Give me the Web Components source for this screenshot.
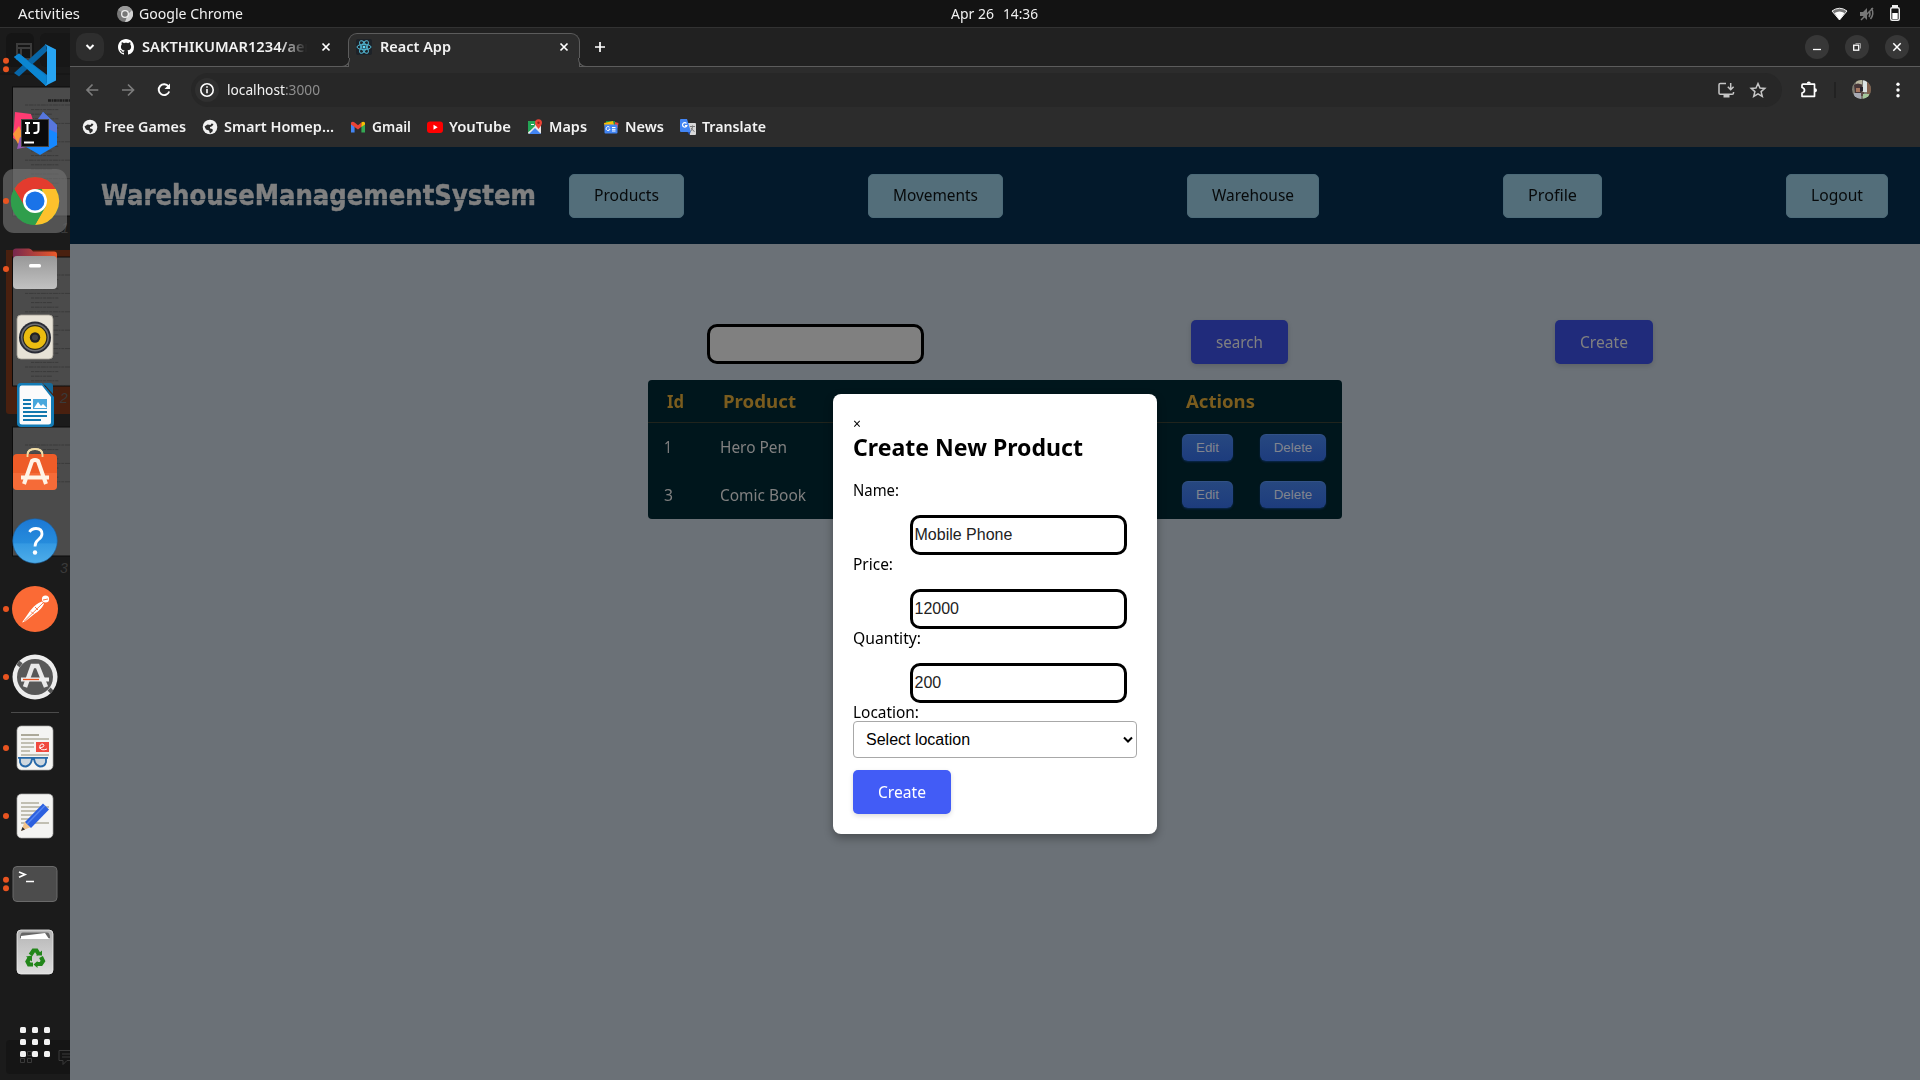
<!DOCTYPE html>
<html lang="en">
<head>
<meta charset="utf-8">
<title>React App</title>
<style>
html,body{margin:0;height:100%;overflow:hidden;background:#1b1b1b}
body{font-family:"Noto Sans","Open Sans",sans-serif;font-size:15.5px;color:#000}
</style>
</head>
<body>
<desk-top></desk-top>
<script>
const define=(name,css,html,setup)=>{
  const tpl=document.createElement('template');
  tpl.innerHTML='<style>*{box-sizing:border-box}'+css+'</style>'+html;
  customElements.define(name,class extends HTMLElement{
    connectedCallback(){
      if(this.shadowRoot)return;
      this.attachShadow({mode:'open'}).appendChild(tpl.content.cloneNode(true));
      if(setup)setup(this,this.shadowRoot);
    }
  });
};

/* Label condensed or widened to a set width */
define('fit-text',
 ':host{display:inline-block;white-space:nowrap;flex:none}span{display:inline-block;transform-origin:0 50%}',
 '<span><slot></slot></span>',
 (h,r)=>{const w=+h.getAttribute('w'),s=r.querySelector('span');h.style.width=w+'px';
  const n=s.getBoundingClientRect().width;if(n)s.style.transform='scaleX('+w/n+')';});

define('top-bar',
 `:host{display:flex;height:28px;background:#131313;border-bottom:1px solid #323232;color:#f0f0f0;font-size:14.2px;line-height:27px;align-items:center}
 .side{flex:1 1 0;display:flex;align-items:center}.l{padding-left:18px}.r{justify-content:flex-end;padding-right:19px}
 .mid{padding-left:69px;display:flex;gap:9px}svg{display:block}.app{margin-left:37px;margin-right:6px}.l,.mid{height:27px}`,
 `<div class="side l"><fit-text w="62">Activities</fit-text>
 <svg class="app" width="16" height="16" viewBox="0 0 16 16"><circle cx="8" cy="8" r="8" fill="#777"/><path d="M8 8 1 4A8 8 0 0 1 15 4Z" fill="#999"/><path d="M15 4A8 8 0 0 1 8 16L11 8Z" fill="#d2d2d2"/><circle cx="8" cy="8" r="4" fill="#eee"/><circle cx="8" cy="8" r="2.7" fill="#777"/></svg>
 <fit-text w="104">Google Chrome</fit-text></div>
 <div class="mid"><fit-text w="43">Apr 26</fit-text><fit-text w="35">14:36</fit-text></div>
 <div class="side r"><svg width="72" height="20" viewBox="0 0 72 20"><path d="M3 7Q10.500 1.500 18 7L10.500 16Z" fill="#777"/><path d="M3 7Q10.500 1.500 18 7L10.500 16Z" fill="none" stroke="#eee" stroke-width="1"/><path d="M5.500 9Q10.500 6 15.500 9L10.500 16Z" fill="#fff"/>
 <g fill="#777" stroke="#777"><path d="M31 8h3l4-4v12l-4-4h-3z" stroke="none"/><path d="M40 7q2 3 0 6M42.500 4q3 6-1 11M32 16 44 4" fill="none" stroke-width="1.500"/></g>
 <path d="M64 3V2h4v1" stroke="#eee" stroke-width="2" fill="none"/><rect x="61.700" y="3.700" width="8.600" height="12.600" rx="1.500" fill="none" stroke="#eee" stroke-width="1.400"/><rect x="63.300" y="9" width="5.400" height="6" fill="#fff"/></svg></div>`);

const paper=(x,y,w,h)=>`<rect x="${x}" y="${y}" width="${w}" height="${h}" rx="4.500" fill="#f4f4f2" stroke="#aaa" stroke-width=".7"/>`;
const lines=(a)=>a.map(l=>`<path d="M${l[0]} ${l[1]}h${l[2]}" stroke="${l[3]||'#c1bfb2'}" stroke-width="2"/>`).join('');
const ICONS={
 code:`<path d="M14 26l5-3.500 34 26-7 6.500Z" fill="#0b78c4"/><path d="M14 42l5 3.500L47 20l-1-7Z" fill="#0866a8"/><path d="M14 26l5-3.500L46 45v10Z" fill="#0b86d2"/><path d="M45 13l11 5.500V49.500L45 55q2-2 2-4V17q0-2-2-4Z" fill="#27a4f2"/>`,
 idea:`<path d="M15 13l16 2 4 12-13 18-9-6 1-12Z" fill="#fe3b72"/><path d="M13 35l6-8 5 12-6 6Z" fill="#f9963b"/><path d="M17 50l3-12 17 8Z" fill="#9659b4"/><path d="M43 13l14 13v20L40 56 26 48 37 25Z" fill="#1688ff"/><path d="M43 13l14 13v8L35 24Z" fill="#5876dc"/><rect x="21.500" y="20.500" width="27" height="27" fill="#0b0b0b" stroke="#444"/><path d="M25 24h5M27.500 24v10M25 34h5M33 24h5.500v7q0 3.500-5 3" stroke="#fff" stroke-width="2.100" fill="none"/><path d="M24 43.500h10" stroke="#fff" stroke-width="2"/>`,
 chrome:`<rect x="3" y="2" width="64" height="64" rx="11" fill="#717171" opacity=".65"/><circle cx="35" cy="34" r="24" fill="#2f9e4c"/><path d="M14.200 22A24 24 0 0 1 55.800 22H35L25 40Z" fill="#e33b2e"/><path d="M55.800 22A24 24 0 0 1 35 58L45.500 40 42 22Z" fill="#fdc12c"/><path d="M14.200 22 25 40 35 46 45 40 35 58A24 24 0 0 1 14.200 22Z" fill="#2f9e4c"/><circle cx="35" cy="34" r="12" fill="#fff"/><circle cx="35" cy="34" r="9.500" fill="#1a73e8"/>`,
 files:`<defs><linearGradient id="a"><stop stop-color="#77284e"/><stop offset="1" stop-color="#ec5a29"/></linearGradient><linearGradient id="b" x2="0" y2="1"><stop stop-color="#989898"/><stop offset="1" stop-color="#c2c2c2"/></linearGradient></defs><path d="M13 24V16q0-2.500 3-2.500h13q2 0 4 3h21q3 0 3 3V26Z" fill="url(#a)"/><rect x="13" y="21" width="44" height="33" rx="4" fill="url(#b)"/><rect x="29" y="29" width="12" height="3.500" rx="1.500" fill="#fff"/>`,
 music:`<rect x="17" y="12" width="36" height="44" rx="4" fill="#e7e2d6" stroke="#a39f96" stroke-width=".8"/><circle cx="35" cy="34.500" r="16" fill="#292b35"/><circle cx="35" cy="34.500" r="14" fill="#707175"/><circle cx="35" cy="34.500" r="12.500" fill="#2a2818"/><circle cx="35" cy="34.500" r="11.300" fill="#ecbd10"/><circle cx="35" cy="34.500" r="5.200" fill="#222"/><circle cx="35" cy="34.500" r="3" fill="#444"/>`,
 writer:`<path d="M21 12h21L54 26v26q0 4-4 4H21q-4 0-4-4V16q0-4 4-4Z" fill="#137bb5"/><path d="M21 14.500h21L51 26v25q0 2.500-2.500 2.500H22q-2.500 0-2.500-2.500V17q0-2.500 2-2.500Z" fill="#fbfbfb"/><path d="M43 12h7q3 0 3 3v8Z" fill="#176a99"/><path d="M23 29h8M23 33h8M23 37h8M23 41h24M23 45h24M23 49h18" stroke="#1478ae" stroke-width="2"/><rect x="33" y="28" width="14" height="10" fill="#48a7dc"/><path d="M34 37l4-6 3 4 2-2 4 4Z" fill="#fff"/>`,
 store:`<path d="M27.500 20v-4q0-6 7.500-6t7.500 6v1" stroke="#f0dca6" stroke-width="1.800" fill="none"/><rect x="13" y="15" width="44" height="36" rx="4" fill="#ee5c28"/><path d="M13 34h44v13q0 4-4 4H17q-4 0-4-4Z" fill="#ff8150" opacity=".4"/><path d="M27.500 18v-2q0-6 7.500-6t7.500 6v2" stroke="#f0dca6" stroke-width="1.800" fill="none"/><path d="M24 45 32 22q3-2 6 0l8 23M21 38.500H49" stroke="#fff3e5" stroke-width="4" fill="none"/>`,
 help:`<defs><linearGradient id="h" x2="0" y2="1"><stop stop-color="#1c78d4"/><stop offset=".55" stop-color="#268cdc"/><stop offset=".56" stop-color="#3499e2"/><stop offset="1" stop-color="#4eade9"/></linearGradient></defs><circle cx="35" cy="34" r="22.300" fill="url(#h)" stroke="#1b5f9e" stroke-width=".6"/><path d="M29.500 25q2-3.500 6.500-3.500 6 0 6 5.500 0 3-4 6-3 2.500-3 6.500" stroke="#fff" stroke-width="2.800" fill="none"/><circle cx="35" cy="45.500" r="2.200" fill="#fff"/>`,
 post:`<circle cx="35" cy="34" r="23" fill="#fb6a35"/><circle cx="45.500" cy="24" r="3.600" fill="#fff"/><path d="M22 47.500l8-11.500q6-8 12-9.500l2 2.500q-3 6-9 9.500l-10 8Z" fill="#fff"/><path d="M24 46.500 43 28M31 36.500l2.500 2.500M35 32l3 3M43 25l5-1" stroke="#fb6a35" stroke-width=".9"/>`,
 updater:`<circle cx="35" cy="34" r="22.500" fill="#ededed"/><circle cx="35" cy="34" r="18" fill="#585858"/><path d="M18 23l3-4M49 49l3-3" stroke="#585858" stroke-width="4"/><path d="M25 44 32.500 23h5L46 44" stroke="#e9e9e9" stroke-width="4.500" fill="none"/><path d="M21 36.500H49" stroke="#eee" stroke-width="4"/><path d="M23 36.500H39" stroke="#e95420" stroke-width="1.300"/>`,
 evince:paper(17,12,36,44)+lines([[21,21,18,'#aca999'],[21,25,28],[21,29,13],[21,33,13],[21,37,9],[21,41,28]])+`<rect x="36" y="28" width="13" height="10" fill="#f0493e"/><path d="M39 34q7-1 4-4-4 0-3 4 2 3 7 1" stroke="#fff" fill="none"/><path d="M18 43.800h30M20 44v4q1 4.500 6 4.500 5-1 6-7.500h2q1 6.500 6 7.500 5 0 6-4.500v-4" stroke="#2668a8" stroke-width="1.800" fill="#cfd8df"/>`,
 edit:paper(17,12,36,44)+lines([[21,21,18],[21,25,28],[21,29,17],[21,33,15],[21,37,12],[21,41,28]])+`<path d="M21 49l4-10 6 6Z" fill="#f2c48c"/><path d="M21 49l1.500-4 2.500 2.500Z" fill="#333"/><path d="M25 40 43 21.500l6 6L31 46Z" fill="#2c60df"/><path d="M27 42 45 23.500" stroke="#5485f0" stroke-width="1.500"/>`,
 term:`<rect x="13" y="16.500" width="44" height="35" rx="4" fill="#4c4c4c" stroke="#6a6a6a" stroke-width="1"/><path d="M19 22l6 2.500-6 2.700M26 31.500h8" stroke="#fff" stroke-width="1.700" fill="none"/>`,
 trash:`<defs><linearGradient id="t" x2="0" y2="1"><stop stop-color="#b5b5b5"/><stop offset="1" stop-color="#dedede"/></linearGradient></defs><rect x="17" y="12" width="36" height="44" rx="4" fill="url(#t)" stroke="#eee" stroke-width=".8"/><path d="M20 20q0-5.500 3-5.500h24q3 0 3 5.500Z" fill="#666"/><path d="M21 21v-3l24-3 4 6Z" fill="#fff"/><g fill="none" stroke="#22861a" stroke-width="4.200"><path d="M30.500 37l3-4.500h3l2.500 4M41 39l2 4-2 3h-4M33 46.500h-4l-1.500-3 2-3.500"/></g><path d="M36 37.500h6v-5ZM37.500 43v7l-4-3.500ZM26 38.500l6-1v6Z" fill="#22861a"/>`
};
define('dock-icon',':host{display:block;width:70px;height:68px}svg{display:block}','<svg width="70" height="68" viewBox="0 0 70 68"></svg>',
 (h,r)=>{const d=+h.getAttribute('dots')||0;
 const dots=d==1?'<circle cx="6" cy="34" r="3" fill="#e95420"/>':d==2?'<circle cx="6" cy="29.700" r="3" fill="#e95420"/><circle cx="6" cy="38.300" r="3" fill="#e95420"/>':'';
 r.querySelector('svg').innerHTML=ICONS[h.getAttribute('icon')]+dots;});

/* Dimmed document viewer that shows through the dock */
const page=(y,s)=>{let o=`<rect x="12.500" y="${y}" width="60" height="129" fill="#4b4b4b" stroke="#0c0c0c"/>`;
 for(let i=0;i<s;i++)o+=`<path d="M${i%4?31:25} ${y+18+i*4.600}H${i%4?52+(i*7)%14:70}" stroke="#2f2f2f" stroke-width="1" stroke-dasharray="3 .7 5 .6 2 .8" opacity=".6"/>`;return o;};
define('under-layer',':host{display:block;position:absolute;inset:0}svg{display:block}',
 `<svg width="70" height="1052" viewBox="0 28 70 1052"><rect x="6" y="33" width="28" height="34" rx="6" fill="#151515"/><rect x="40" y="33" width="36" height="34" rx="6" fill="#171717"/><path d="M17 44h14v15H17zM17 48h14M21 48v11" fill="none" stroke="#3c3c3c" stroke-width="2"/><path d="M0 74h70" stroke="#151515"/>
 ${page(87,20)}<path d="M6 250h64v164H9q-3 0-3-3Z" fill="#49200f"/>${page(257,26)}${page(427,9)}
 <path d="M48 100.500h22" stroke="#1e1e1e" stroke-width="2.500" stroke-dasharray="3 .6 1.500 .6"/>
 <g font-family="Liberation Sans" font-style="italic" font-size="14" fill="#3a3a3a"><text x="61" y="233">1</text><text x="60" y="403">2</text><text x="60" y="573">3</text></g>
 <path d="M0 1040h70v34H10q-4 0-4-4v-26q0-4 4-4" fill="#151515"/><path d="M20.500 1058.500h4v4h-4zM27.500 1058.500h4v4h-4zM27.500 1051.500h4v4h-4z" fill="none" stroke="#3a3a3a"/><path d="M75 1050.500H59v10h4v4l4-4h8M62 1054h8M62 1057h8" fill="none" stroke="#3a3a3a"/></svg>`);
define('side-dock',
 `:host{display:flex;flex-direction:column;width:70px;flex:none;background:#1b1b1b;position:relative;padding-top:3px}
 dock-icon,hr,.apps{position:relative}hr{border:0;height:1px;background:#4b4b4b;margin:1px 11px;width:48px}
 .apps{display:grid;grid-template-columns:repeat(3,6px);gap:6px;margin:41px 0 0 20px}.apps i{width:6px;height:6px;border-radius:1.500px;background:#f2f2f2}`,
 `<under-layer></under-layer>`+[['code',2],['idea',0],['chrome',1],['files',1],['music',0],['writer',0],['store',0],['help',0],['post',1],['updater',1],0,['evince',1],['edit',1],['term',2],['trash',0]].map(a=>a?`<dock-icon icon="${a[0]}" dots="${a[1]}"></dock-icon>`:'<hr>').join('')+
 `<div class="apps">${'<i></i>'.repeat(9)}</div>`);

define('tab-strip',
 `:host{display:flex;height:39px;background:#212121;color:#f2f2f2;font-weight:600;font-size:14.200px;line-height:38px;position:relative;border-bottom:1px solid #5c5c5c;align-items:center}
 svg{display:block;flex:none}.find{width:28px;height:28px;border-radius:10px;background:#2e2e2e;margin-left:6px;display:grid;place-items:center}
 .tab{display:flex;align-items:center;height:38px}.one{margin-left:14px;width:230px}.one svg:first-child{margin-right:8px}
 .fade{width:171px;-webkit-mask:linear-gradient(90deg,#000 138px,transparent 165px)}.one .x{margin-left:7px}
 .two{width:232px;height:34px;margin-top:5px;background:#2c2c2c;border:1px solid #5c5c5c;border-bottom:0;border-radius:9px 9px 0 0;line-height:28px;padding:0 0 7px 7px;margin-bottom:-1px;position:relative}
 .two::before,.two::after{content:"";position:absolute;bottom:0;width:8px;height:8px;border-bottom:1px solid #5c5c5c}
 .two::before{left:-8px;border-right:1px solid #5c5c5c;border-radius:0 0 8px 0;background:radial-gradient(circle at 0 0,#212121 8px,#2c2c2c 8.500px)}
 .two::after{right:-8px;border-left:1px solid #5c5c5c;border-radius:0 0 0 8px;background:radial-gradient(circle at 100% 0,#212121 8px,#2c2c2c 8.500px)}
 .two svg:first-child{margin-right:8px}.two .x{margin-left:107px}.plus{margin-left:14px}
 .wm{margin-left:auto;display:flex;gap:16px;margin-right:11px}`,
 `<div class="find"><svg width="12" height="12" viewBox="0 0 12 12"><path d="M2.500 4l3.500 3.500L9.500 4" fill="none" stroke="#fff" stroke-width="2"/></svg></div>
 <div class="tab one"><svg width="16" height="16" viewBox="0 0 16 16"><path fill="#fff" d="M8 0C3.580 0 0 3.580 0 8c0 3.540 2.290 6.530 5.470 7.590.4.070.55-.17.55-.38 0-.19-.01-.82-.01-1.490-2.010.37-2.530-.49-2.690-.94-.09-.23-.48-.94-.82-1.130-.28-.15-.68-.52-.01-.53.63-.01 1.080.58 1.230.82.72 1.210 1.870.87 2.330.66.070-.52.28-.87.51-1.070-1.780-.2-3.640-.89-3.640-3.950 0-.87.31-1.590.82-2.150-.08-.2-.36-1.020.08-2.120 0 0 .67-.21 2.200.82.64-.18 1.320-.27 2-.27s1.360.09 2 .27c1.530-1.040 2.200-.82 2.200-.82.44 1.100.16 1.920.08 2.120.51.56.82 1.270.82 2.150 0 3.070-1.870 3.750-3.650 3.950.29.25.54.73.54 1.480 0 1.070-.01 1.930-.01 2.200 0 .21.15.46.55.38A8 8 0 0 0 16 8c0-4.420-3.580-8-8-8z"/></svg>
 <div class="fade"><fit-text w="169">SAKTHIKUMAR1234/aer</fit-text></div><svg class="x" width="12" height="12" viewBox="0 0 12 12"><path d="M2.500 2.500l7 7M9.500 2.500l-7 7" stroke="#fff" stroke-width="1.700"/></svg></div>
 <div class="tab two"><svg width="16" height="16" viewBox="0 0 16 16"><rect width="16" height="16" rx="2" fill="#1d2228"/><g fill="none" stroke="#53b8d3" stroke-width="1"><ellipse cx="8" cy="8" rx="7" ry="2.700"/><ellipse cx="8" cy="8" rx="7" ry="2.700" transform="rotate(60 8 8)"/><ellipse cx="8" cy="8" rx="7" ry="2.700" transform="rotate(120 8 8)"/></g><circle cx="8" cy="8" r="1.500" fill="#61dafb"/></svg><fit-text w="71">React App</fit-text><svg class="x" width="12" height="12" viewBox="0 0 12 12"><path d="M2.500 2.500l7 7M9.500 2.500l-7 7" stroke="#fff" stroke-width="1.700"/></svg></div>
 <svg class="plus" width="12" height="12" viewBox="0 0 12 12"><path d="M6 1v10M1 6h10" stroke="#fff" stroke-width="1.700"/></svg>
 <div class="wm">${['<path d="M8 14.500h8" stroke="#fff" stroke-width="1.300"/>','<path d="M10.500 8.500h5v5" fill="none" stroke="#999"/><rect x="8.700" y="10.200" width="5" height="5" fill="none" stroke="#fff" stroke-width="1.300"/>','<path d="M8.300 8.300l7.400 7.400M15.700 8.300l-7.400 7.400" stroke="#fff" stroke-width="1.500"/>'].map(p=>`<svg width="24" height="24" viewBox="0 0 24 24"><circle cx="12" cy="12" r="12" fill="#373737"/>${p}</svg>`).join('')}</div>`);

define('tool-bar',
 `:host{display:flex;height:46px;background:#2c2c2c;align-items:center;color:#f2f2f2;font-size:14.200px}
 svg{display:block;flex:none}.omni{display:flex;align-items:center;height:34px;width:1591px;border-radius:17px;background:#272727;padding:0 14px 0 4px;margin-left:17px}
 .url{margin-left:8px;line-height:32px}.sp{flex:1}.nav{display:flex;gap:16px;margin-left:12px}.star{margin-left:12px}.sep{width:2px;height:16px;background:#222;margin-left:15px}`,
 `<div class="nav"><svg width="20" height="20" viewBox="0 0 20 20"><path d="M16.300 10H5.500M10.500 4.500 5 10l5.500 5.500" fill="none" stroke="#7c7c7c" stroke-width="1.700"/></svg>
 <svg width="20" height="20" viewBox="0 0 20 20"><path d="M4 10h11M10 4.500l5.500 5.500-5.500 5.500" fill="none" stroke="#7c7c7c" stroke-width="1.700"/></svg>
 <svg width="20" height="20" viewBox="0 0 20 20"><path d="M14.500 6.500A5.400 5.400 0 1 0 15.200 11.500" fill="none" stroke="#fff" stroke-width="1.900"/><path d="M16 3.500V9h-5.500Z" fill="#fff"/></svg></div>
 <div class="omni"><svg width="24" height="24" viewBox="0 0 24 24"><circle cx="12" cy="12" r="12" fill="#303030"/><circle cx="12" cy="12" r="6.200" fill="none" stroke="#fff" stroke-width="1.600"/><path d="M12 11v4.300M12 8.200v1.600" stroke="#fff" stroke-width="1.600"/></svg>
 <span class="url"><fit-text w="93">localhost<span style="color:#8e8e8e">:3000</span></fit-text></span><span class="sp"></span>
 <svg width="20" height="20" viewBox="0 0 20 20"><path d="M10 3.500H4.300q-1.300 0-1.300 1.300V13q0 1.300 1.300 1.300h11.900q1.300 0 1.300-1.300v-1M14.700 3v6M11.800 6.800l2.900 2.900 2.900-2.900" fill="none" stroke="#c6c6c6" stroke-width="1.500"/><path d="M7.500 14h6v3.500h-6z" fill="#c6c6c6"/></svg>
 <svg class="star" width="20" height="20" viewBox="0 0 20 20"><path d="M10 3.500l2 4.500 4.800.4-3.700 3.200 1.200 4.900L10 13.900l-4.300 2.600 1.200-4.900L3.200 8.400 8 8Z" fill="none" stroke="#c6c6c6" stroke-width="1.500"/></svg></div>
 <svg style="margin-left:17px" width="20" height="20" viewBox="0 0 20 20"><path d="M4 4.200h11.500V16.300H3V13q2.500-.5 2.500-2.700T3 7.500V5.200q0-1 1-1Z" fill="none" stroke="#fff" stroke-width="1.700" stroke-linejoin="round"/><path d="M7.800 3.500a2 2 0 0 1 4 0ZM16 8.200a2 2 0 0 1 0 4Z" fill="#fff"/></svg>
 <span class="sep"></span>
 <svg style="margin-left:16px" width="20" height="20" viewBox="0 0 20 20"><defs><clipPath id="c"><circle cx="9.500" cy="9.500" r="9.500"/></clipPath></defs><g clip-path="url(#c)"><path d="M0 0h20v20H0z" fill="#7d7c71"/><path d="M4 0h6v4H4z" fill="#b9b7a0"/><path d="M11 0h4v12h-4z" fill="#dce4e5"/><path d="M15 0h5v20h-5z" fill="#80604c"/><path d="M2 5q4-3 8 0v8H3z" fill="#463638"/><path d="M4 8h4v4H4z" fill="#a5765f"/><path d="M8 7h3v4H8z" fill="#27242c"/><path d="M2 13h7v7H2z" fill="#a7aab4"/><path d="M9 12h3v4H9z" fill="#5d4a45"/><path d="M11 14h6v6h-6z" fill="#a5c79a"/></g></svg>
 <svg style="margin-left:24px" width="4" height="16" viewBox="0 0 4 16"><g fill="#fff"><circle cx="2" cy="2.200" r="1.700"/><circle cx="2" cy="8" r="1.700"/><circle cx="2" cy="13.800" r="1.700"/></g></svg>`);

const globe='<circle cx="8" cy="8" r="7.300" fill="#f2f2f2"/><path d="M2.500 7.500l3-2 3 .5 1-1.500 2 .5-1.500 2.500-2 .5v1.500l3 .5-.5 2.500-2.500 2-1-3-3-1Z" fill="#2c2c2c"/><path d="M8.500 8 12 7l1.500 2-2 2.500Z" fill="#f2f2f2"/>';
const BM={globe,
 gmail:'<path d="M1 13.500V3.500L4.600 6.300v7.200Z" fill="#4285f4"/><path d="M15 13.500V3.500L11.400 6.300v7.200Z" fill="#34a853"/><path d="M1 3.800Q2.500 1.800 4.600 3.500L8 6.200l3.400-2.700v4.300L8 10.400 1 5.500Z" fill="#ea4335"/><path d="M11.400 3.500Q13.500 1.800 15 3.800V5.500L11.400 8Z" fill="#fbbc04"/>',
 yt:'<rect x="0" y="2.500" width="16" height="11.500" rx="3" fill="#f00"/><path d="M6.500 5.800v5l4.200-2.500Z" fill="#fff"/>',
 maps:'<rect x="1" y="2" width="13" height="13" rx="1.500" fill="#e9e9e9"/><path d="M1 13.500 8 7l-6.500-5H1Z" fill="#34a853"/><path d="M2 2h10L2.500 12H1V3Z" fill="#23a455"/><path d="M2 15l6-6 6 6Z" fill="#4285f4"/><path d="M4 5.500h3" stroke="#fff"/><path d="M11.500 10Q8 6 8 3.800a3.500 3.500 0 0 1 7 0Q15 6 11.500 10Z" fill="#ea4335"/><circle cx="11.500" cy="3.800" r="1.200" fill="#8d2118"/>',
 news:'<path d="M3 2h9v4H3z" fill="#188f4a"/><path d="M1 4l9-2 1 4-9 3Z" fill="#fbbc04"/><path d="M12 3l3.500 1-1 5h-3Z" fill="#ea4335"/><rect x="1.500" y="5.500" width="13" height="9" rx="1" fill="#4285f4"/><path d="M6.500 8.200a2 2 0 1 0 .5 2H5.500M9 8.500h3.500M9 10.300h3.500M9 12h3.500" stroke="#fff" fill="none"/>',
 tr:'<path d="M7 4h8q1 0 1 1v10q0 1-1 1H10Z" fill="#d8d8d8"/><path d="M0 1q0-1 1-1h6l4 13H1q-1 0-1-1Z" fill="#4285f4"/><path d="M7.500 13h3l-1 3Z" fill="#2554b8"/><path d="M6.500 4.500a2.200 2.200 0 1 0 .3 2.200H5" stroke="#fff" fill="none" stroke-width="1.200"/><path d="M10 7.500h5M12.500 6.500v1q0 3-2 5M11 9q1.500 2.500 3.500 3.500" stroke="#777" fill="none"/>'};
define('book-mark',':host{display:flex;align-items:center;gap:6px}svg{display:block;flex:none}','<svg width="16" height="16" viewBox="0 0 16 16"></svg><slot></slot>',
 (h,r)=>r.querySelector('svg').innerHTML=BM[h.getAttribute('icon')]);
define('bookmark-bar',
 ':host{display:flex;height:34px;background:#2c2c2c;color:#f2f2f2;font-weight:600;font-size:14.200px;line-height:28px;padding:0 0 6px 12px;align-items:center;gap:16px}',
 [['globe',82,'Free Games'],['globe',110,'Smart Homep…'],['gmail',39,'Gmail'],['yt',62,'YouTube'],['maps',38,'Maps'],['news',39,'News'],['tr',64,'Translate']].map(b=>`<book-mark icon="${b[0]}"><fit-text w="${b[1]}">${b[2]}</fit-text></book-mark>`).join(''));

define('nav-button',':host{display:flex;height:44px;padding:0 24px 2px;align-items:center;background:#536e7a;border:1px solid #4c6a78;border-radius:5px;line-height:40px;color:#070a0b}','<slot></slot>');
define('nav-bar',
 `:host{display:flex;height:97px;background:#03192b;padding:0 32px 0 31px;align-items:center}
 .brand{position:relative;width:435px;margin-right:33px;font:bold 28.500px/40px "DejaVu Sans",sans-serif;color:#808080;-webkit-text-stroke:.5px #808080}
 .brand::after{content:"";position:absolute;left:0;right:0;top:23px;height:1px;background:rgba(3,25,43,.6)}
 .links{flex:1;display:flex;justify-content:space-between}`,
 `<div class="brand"><fit-text w="435">WarehouseManagementSystem</fit-text></div>
 <div class="links">${[['Products',65],['Movements',85],['Warehouse',82],['Profile',49],['Logout',52]].map(a=>`<nav-button><fit-text w="${a[1]}">${a[0]}</fit-text></nav-button>`).join('')}</div>`);

define('action-button',
 `:host{display:flex;width:98px;height:44px;align-items:center;justify-content:center;border-radius:5px;background:#425cf6;color:#fff;line-height:44px;box-shadow:0 2px 5px rgba(0,0,0,.14);flex:none}
 :host([dim]){background:#202b7b;color:#808080}`,'<slot></slot>');
define('row-button',
 `:host{display:flex;height:27px;align-items:center;justify-content:center;border-radius:6px;background:linear-gradient(#274880,#1d3c7d);color:#81858f;font:13.333px "Liberation Sans",sans-serif;box-shadow:inset 0 .5px 1px rgba(255,255,255,.1),0 1px 2px rgba(20,60,130,.5);width:51px}
 :host([wide]){width:66px}`,'<slot></slot>');
define('product-table',
 `:host{display:block;width:694px;height:139px;background:#00161c;border-radius:4px;color:#808080;margin-left:578px;margin-top:16px}
 .h,.r{display:flex;align-items:center}.h{height:43px;border-bottom:1px solid #20241d;color:#7a5c1e;font-weight:700;font-size:18.300px;line-height:42px;padding-left:19px}
 .r{height:47px;padding-left:16px;line-height:46px}.r fit-text{margin-left:-.5px}.r.a{height:48px}.id{width:56px}.name{width:462px}.h .name{width:463px}.gap{width:27px}`,
 `<div class="h"><span class="id"><fit-text w="17">Id</fit-text></span><span class="name"><fit-text w="73">Product</fit-text></span><fit-text w="69">Actions</fit-text></div>
 <div class="r a"><span class="id"><fit-text w="8">1</fit-text></span><span class="name"><fit-text w="67">Hero Pen</fit-text></span><row-button>Edit</row-button><span class="gap"></span><row-button wide>Delete</row-button></div>
 <div class="r"><span class="id"><fit-text w="9">3</fit-text></span><span class="name"><fit-text w="86">Comic Book</fit-text></span><row-button>Edit</row-button><span class="gap"></span><row-button wide>Delete</row-button></div>`);

define('product-form',
 `:host{display:block;width:324px;height:440px;background:#fff;border-radius:8px;padding:20px;box-shadow:0 4px 10px rgba(0,0,0,.32)}
 .close{line-height:20px;height:20px;font-size:14px;display:block}h2{margin:0;font-size:23.300px;line-height:27px;height:45px;font-weight:700}
 label{display:block;height:74px;line-height:22px}.field{display:flex;align-items:center;width:217px;height:40px;border:3px solid #000;border-radius:10px;margin:14px 0 0 57px;padding-left:1.500px;font:16px "Liberation Sans",sans-serif;color:#222}
 .loc{line-height:22px;height:20px}.sel{display:flex;align-items:center;justify-content:space-between;height:37px;border:1px solid #a8a8a8;border-radius:4px;font:16px "Liberation Sans",sans-serif;padding:1px 3px 0 12px;margin-bottom:12px}`,
 `<fit-text class="close" w="8">×</fit-text><h2><fit-text w="230">Create New Product</fit-text></h2>
 <label><fit-text w="46">Name:</fit-text><div class="field">Mobile Phone</div></label>
 <label><fit-text w="40">Price:</fit-text><div class="field">12000</div></label>
 <label><fit-text w="68">Quantity:</fit-text><div class="field">200</div></label>
 <div class="loc"><fit-text w="66">Location:</fit-text></div>
 <div class="sel"><span>Select location</span><svg width="10" height="8" viewBox="0 0 10 8"><path d="M1 1.500l4 4 4-4" fill="none" stroke="#000" stroke-width="2"/></svg></div>
 <action-button><fit-text w="48">Create</fit-text></action-button>`);

define('web-page',
 `:host{display:flex;flex-direction:column;flex:1;background:#6b7177;position:relative}
 .bar{display:flex;height:44px;margin-top:76px;align-items:flex-end}.q{width:217px;height:40px;border:3px solid #000;border-radius:10px;background:#808080;margin-left:637px}
 .bar action-button{margin-left:267px;width:97px}.bar .c{margin-left:267px;width:98px}
 .modal{position:absolute;inset:0;display:flex;align-items:center;justify-content:center;padding-top:1px}`,
 `<nav-bar></nav-bar><div class="bar"><div class="q"></div><action-button dim><fit-text w="47">search</fit-text></action-button><action-button dim class="c"><fit-text w="48">Create</fit-text></action-button></div>
 <product-table></product-table><div class="modal"><product-form></product-form></div>`);

define('browser-window',':host{display:flex;flex-direction:column;flex:1;min-width:0}','<tab-strip></tab-strip><tool-bar></tool-bar><bookmark-bar></bookmark-bar><web-page></web-page>');
define('desk-top',':host{display:flex;flex-direction:column;width:1920px;height:1080px}.main{display:flex;flex:1;min-height:0}','<top-bar></top-bar><div class="main"><side-dock></side-dock><browser-window></browser-window></div>');
</script>
</body>
</html>
